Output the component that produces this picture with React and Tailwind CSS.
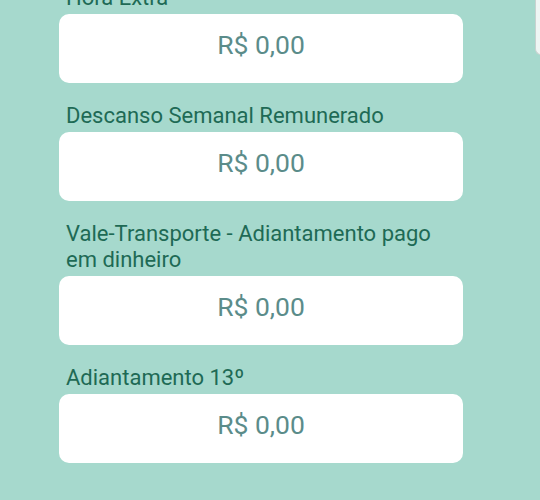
const fields = [
  { label: "Hora Extra", value: "R$ 0,00" },
  { label: "Descanso Semanal Remunerado", value: "R$ 0,00" },
  { label: "Vale-Transporte - Adiantamento pago em dinheiro", value: "R$ 0,00" },
  { label: "Adiantamento 13º", value: "R$ 0,00" },
];

function Field({ label, value }) {
  return (
    <div className="flex flex-col">
      <label className="px-[7px] mb-[3px] text-[22px] leading-[26px] text-[#1e6a55]">
        {label}
      </label>
      <div className="h-[69px] rounded-[10px] bg-white flex items-center justify-center pb-[7px]">
        <span className="text-[26.5px] text-[#5b8c8a]">{value}</span>
      </div>
    </div>
  );
}

export default function App() {
  return (
    <div
      className="relative w-[540px] h-[500px] overflow-hidden bg-[#a6d9cd]"
      style={{ fontFamily: "Roboto, 'Liberation Sans', sans-serif" }}
    >
      <div className="w-[404px] ml-[59px] -mt-[15px] flex flex-col gap-[20px]">
        {fields.map((f) => (
          <Field key={f.label} label={f.label} value={f.value} />
        ))}
      </div>
      {/* panel peeking from the right edge */}
      <div className="absolute left-[535px] top-0 w-[20px] h-[55px] bg-[#eef6f4] border-l border-b border-[#c9d2d0] rounded-bl-[6px]" />
    </div>
  );
}
